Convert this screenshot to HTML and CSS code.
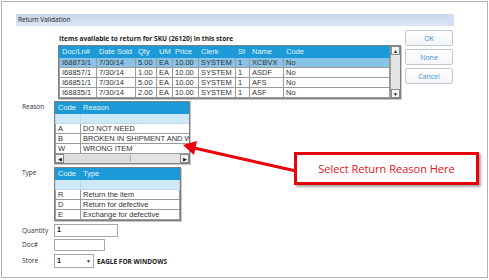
FILE: index.html
```html
<!DOCTYPE html>
<html lang="en">
<head>
  <meta charset="UTF-8" />
  <title>Return Validation</title>
  <link rel="stylesheet" href="styles.css">
</head>
<body>

<div class="frame">
  <div class="dialog">
    <div class="titlebar">Return Validation</div>

    <div class="top">
      <div class="items">
        <div class="items-heading">Items available to return for SKU (26120) in this store</div>
        <div class="grid items-grid">
          <table>
            <colgroup>
              <col style="width:37px"><col style="width:39px"><col style="width:21px">
              <col style="width:16px"><col style="width:26px"><col style="width:37px">
              <col style="width:14px"><col style="width:34px"><col>
            </colgroup>
            <tr class="head">
              <th>Doc/Ln#</th><th>Date Sold</th><th>Qty</th><th>UM</th><th>Price</th><th>Clerk</th><th>St</th><th>Name</th><th>Code</th>
            </tr>
            <tr class="selected">
              <td>I68873/1</td><td>7/30/14</td><td>5.00</td><td>EA</td><td>10.00</td><td>SYSTEM</td><td>1</td><td>XCBVX</td><td>No</td>
            </tr>
            <tr>
              <td>I68857/1</td><td>7/30/14</td><td>1.00</td><td>EA</td><td>10.00</td><td>SYSTEM</td><td>1</td><td>ASDF</td><td>No</td>
            </tr>
            <tr>
              <td>I68851/1</td><td>7/30/14</td><td>5.00</td><td>EA</td><td>10.00</td><td>SYSTEM</td><td>1</td><td>AFS</td><td>No</td>
            </tr>
            <tr>
              <td>I68835/1</td><td>7/30/14</td><td>2.00</td><td>EA</td><td>10.00</td><td>SYSTEM</td><td>1</td><td>ASF</td><td>No</td>
            </tr>
          </table>
          <div class="vscroll">
            <span class="sbtn">&#9650;</span>
            <span class="strack"></span>
            <span class="sbtn">&#9660;</span>
          </div>
        </div>
      </div>

      <div class="buttons">
        <button class="dlg-btn">OK</button>
        <button class="dlg-btn">None</button>
        <button class="dlg-btn">Cancel</button>
      </div>
    </div>

    <div class="field reason-field">
      <div class="label">Reason</div>
      <div class="grid reason-grid">
        <div class="clip">
          <table>
            <colgroup><col style="width:25px"><col style="width:130px"></colgroup>
            <tr class="head"><th>Code</th><th>Reason</th></tr>
            <tr class="blank"><td></td><td></td></tr>
            <tr><td>A</td><td>DO NOT NEED</td></tr>
            <tr><td>B</td><td>BROKEN IN SHIPMENT AND WILL</td></tr>
            <tr><td>W</td><td>WRONG ITEM</td></tr>
          </table>
        </div>
        <div class="hscroll">
          <span class="sbtn">&#9664;</span>
          <span class="htrack"><span class="hthumb"></span></span>
          <span class="sbtn">&#9654;</span>
        </div>
      </div>
    </div>

    <div class="field type-field">
      <div class="label">Type</div>
      <div class="grid type-grid">
        <table>
          <colgroup><col style="width:25px"><col></colgroup>
          <tr class="head"><th>Code</th><th>Type</th></tr>
          <tr class="blank"><td></td><td></td></tr>
          <tr><td>R</td><td>Return the item</td></tr>
          <tr><td>D</td><td>Return for defective</td></tr>
          <tr><td>E</td><td>Exchange for defective</td></tr>
        </table>
      </div>
    </div>

    <div class="field small-field qty-field">
      <div class="label">Quantity</div>
      <div class="input qty-input">1</div>
    </div>
    <div class="field small-field">
      <div class="label">Doc#</div>
      <div class="input doc-input"></div>
    </div>
    <div class="field small-field store-field">
      <div class="label">Store</div>
      <div class="input store-select">1<span class="drop">&#9660;</span></div>
      <span class="store-name">EAGLE FOR WINDOWS</span>
    </div>
  </div>

  <!-- annotation over the dialog -->
  <svg class="arrow" width="489" height="280" viewBox="0 0 489 280">
    <line x1="296" y1="171" x2="194" y2="148" stroke="#e8000b" stroke-width="3"/>
    <polygon points="183,145 197,141 194,155" fill="#e8000b"/>
  </svg>
  <div class="callout">Select Return Reason Here</div>
</div>

</body>
</html>
```

FILE: styles.css
```css
    body {
      margin: 0;
      background-color: #ffffff;
      font-family: 'Liberation Sans', Arial, sans-serif;
    }

    .frame {
      position: relative;
      width: 485px;
      height: 275px;
      margin: 1px;
      border: 1px solid #b4b4b4;
      background-color: #ffffff;
      overflow: hidden;
    }

    .dialog {
      padding: 12px 0 0 14px;
    }

    .titlebar {
      width: 430px;
      height: 12px;
      padding-left: 2px;
      font-family: 'Open Sans', sans-serif;
      font-size: 6.5px;
      line-height: 12px;
      color: #222;
      background: linear-gradient(#c6d3e9, #dfe7f3);
      border-right: 6px solid #d4def0;
    }

    .top {
      display: flex;
      align-items: flex-start;
    }

    .items {
      margin-left: 42px;
    }

    .items-heading {
      font-family: 'Open Sans', sans-serif;
      font-weight: bold;
      font-size: 6.6px;
      color: #222;
      height: 13px;
      line-height: 13px;
      margin: 6px 0 0 1px;
    }

    .grid {
      border: 1px solid #808080;
      background-color: #ffffff;
      box-shadow: 1px 1px 0 #c8c8c8;
    }

    table {
      border-collapse: collapse;
      table-layout: fixed;
      font-family: 'Liberation Sans', Arial, sans-serif;
      font-size: 7.5px;
      color: #333;
    }

    th, td {
      padding: 0 0 0 2px;
      height: 9px;
      line-height: 8px;
      text-align: left;
      font-weight: normal;
      white-space: nowrap;
      overflow: hidden;
      border: 1px solid #9a9a9a;
    }

    tr.head th {
      height: 10px;
      line-height: 10px;
      background-color: #1b9ad7;
      color: #e6f4fc;
      border-color: #1b9ad7;
    }

    tr.selected td {
      background-color: #8ac3e8;
    }

    tr.blank td {
      background-color: #cfe8f8;
      border-color: #b9dcf2;
    }

    .items-grid {
      display: flex;
      width: 341px;
    }

    .items-grid table {
      width: 332px;
    }

    .vscroll {
      width: 9px;
      display: flex;
      flex-direction: column;
      background-color: #e4e4e4;
      border-left: 1px solid #9a9a9a;
    }

    .sbtn {
      display: flex;
      align-items: center;
      justify-content: center;
      width: 9px;
      height: 9px;
      font-size: 5px;
      color: #111;
      background-color: #f4f4f4;
      border: 1px solid #8a8a8a;
      box-sizing: border-box;
    }

    .strack {
      flex: 1;
    }

    .buttons {
      display: flex;
      flex-direction: column;
      gap: 3px;
      margin: 4px 0 0 4px;
    }

    .dlg-btn {
      width: 48px;
      height: 16px;
      padding: 0;
      font-family: 'Open Sans', sans-serif;
      font-size: 7px;
      color: #3b8fe0;
      background: linear-gradient(#ffffff, #f3f5f8);
      border: 1px solid #c3c8cf;
      border-radius: 2px;
    }

    .field {
      display: flex;
      align-items: flex-start;
    }

    .label {
      width: 38px;
      padding-left: 6px;
      box-sizing: border-box;
      font-family: 'Open Sans', sans-serif;
      font-size: 6.5px;
      color: #333;
      line-height: 12px;
      flex-shrink: 0;
    }

    .reason-field {
      margin-top: 2px;
    }

    .reason-grid {
      width: 134px;
    }

    .clip {
      overflow: hidden;
    }

    .reason-grid table {
      width: 155px;
    }

    .reason-grid td:last-child,
    .reason-grid th:last-child {
      border-right: none;
    }

    .hscroll {
      display: flex;
      height: 9px;
      background-color: #e4e4e4;
    }

    .htrack {
      flex: 1;
      display: flex;
    }

    .hthumb {
      width: 66px;
      margin: 1px 0;
      background-color: #dcdcdc;
      border-right: 1px solid #b0b0b0;
    }

    .type-field {
      margin-top: 3px;
    }

    .type-grid table {
      width: 125px;
    }

    .small-field {
      align-items: center;
      margin-top: 2px;
    }

    .qty-field {
      margin-top: 3px;
    }

    .store-field {
      margin-top: 3px;
    }

    .input {
      height: 12px;
      box-sizing: border-box;
      border: 1px solid #a8a8a8;
      background-color: #fff;
      font-size: 7px;
      line-height: 10px;
      font-weight: bold;
      padding-left: 2px;
      color: #111;
    }

    .qty-input {
      width: 64px;
      height: 13px;
    }

    .doc-input {
      width: 51px;
    }

    .store-select {
      display: flex;
      justify-content: space-between;
      width: 40px;
      height: 14px;
      line-height: 12px;
      padding-right: 0;
    }

    .drop {
      width: 9px;
      font-size: 5px;
      text-align: center;
      color: #333;
    }

    .store-name {
      margin-left: 3px;
      font-family: 'Open Sans', sans-serif;
      font-weight: bold;
      font-size: 6.5px;
      color: #222;
    }

    .arrow {
      position: absolute;
      top: -2px;
      left: -2px;
    }

    .callout {
      position: absolute;
      left: 292px;
      top: 150px;
      width: 179px;
      height: 27px;
      border: 3px solid #e8000b;
      background-color: #fff;
      box-shadow: 2px 2px 2px #a8a8a8;
      font-family: 'Open Sans', sans-serif;
      font-size: 11px;
      line-height: 27px;
      text-align: center;
      color: #e8101a;
    }
```
